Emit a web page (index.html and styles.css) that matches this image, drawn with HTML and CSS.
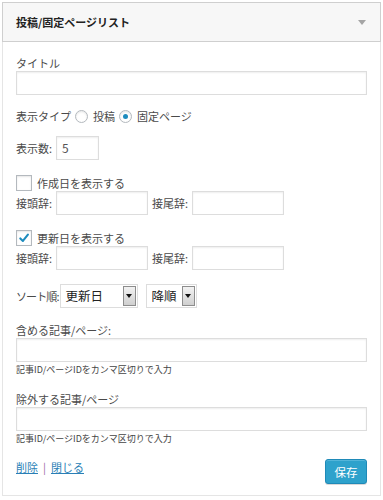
FILE: index.html
```html
<!DOCTYPE html>
<html lang="ja">
<head>
<meta charset="utf-8">
<title>投稿/固定ページリスト</title>
<link rel="stylesheet" href="styles.css">
</head>
<body>
<div class="widget">
  <div class="widget-top">
    <h3 class="widget-title">投稿/固定ページリスト</h3>
    <span class="toggle-arrow"></span>
  </div>
  <div class="widget-inside">
    <div class="block-label">タイトル</div>
    <div class="text-input wide"></div>

    <div class="row type-row">
      <span>表示タイプ</span>
      <span class="radio"></span>
      <span class="radio-label">投稿</span>
      <span class="radio checked"></span>
      <span class="radio-label">固定ページ</span>
    </div>

    <div class="row count-row">
      <span class="lbl-count">表示数:</span>
      <div class="text-input count">5</div>
    </div>

    <div class="row check-row">
      <span class="checkbox"></span>
      <span class="check-label">作成日を表示する</span>
    </div>
    <div class="row affix-row">
      <span class="lbl-affix">接頭辞:</span>
      <div class="text-input affix"></div>
      <span class="lbl-affix second">接尾辞:</span>
      <div class="text-input affix"></div>
    </div>

    <div class="row check-row">
      <span class="checkbox checked">
        <svg viewBox="0 0 16 16" width="16" height="16"><path d="M4.3 8.4 L6.9 10.9 L11.9 4.6" fill="none" stroke="#1e8cbe" stroke-width="2.1" stroke-linecap="round" stroke-linejoin="round"/></svg>
      </span>
      <span class="check-label">更新日を表示する</span>
    </div>
    <div class="row affix-row">
      <span class="lbl-affix">接頭辞:</span>
      <div class="text-input affix"></div>
      <span class="lbl-affix second">接尾辞:</span>
      <div class="text-input affix"></div>
    </div>

    <div class="row sort-row">
      <span class="lbl-sort">ソート順:</span>
      <div class="select sel-field"><span class="sel-text">更新日</span><span class="sel-btn"></span></div>
      <div class="select sel-order"><span class="sel-text">降順</span><span class="sel-btn"></span></div>
    </div>

    <div class="block-label gap">含める記事/ページ:</div>
    <div class="text-input wide"></div>
    <div class="help">記事ID/ページIDをカンマ区切りで入力</div>

    <div class="block-label gap">除外する記事/ページ</div>
    <div class="text-input wide"></div>
    <div class="help">記事ID/ページIDをカンマ区切りで入力</div>

    <div class="footer">
      <div class="links"><a href="#" class="link">削除</a><span class="sep">|</span><a href="#" class="link">閉じる</a></div>
      <button class="save">保存</button>
    </div>
  </div>
</div>
</body>
</html>
```
FILE: styles.css
```css
* { box-sizing: border-box; }
body {
  margin: 0;
  background: #ffffff;
  font-family: "Noto Sans CJK JP", "Noto Sans", sans-serif;
  font-size: 11px;
  color: #4a4a4a;
}
.widget {
  margin: 2px 0 0 2px;
  width: 379px;
}
.widget-top {
  height: 40px;
  border: 1px solid #cfcfcf;
  background: #f7f7f7;
  display: flex;
  align-items: center;
  justify-content: space-between;
  padding: 0 14px 0 13px;
}
.widget-title {
  margin: 0;
  font-size: 11px;
  font-weight: bold;
  color: #222222;
  line-height: 16px;
}
.toggle-arrow {
  width: 0;
  height: 0;
  border-left: 4px solid transparent;
  border-right: 4px solid transparent;
  border-top: 5px solid #a5a5a5;
  margin-top: 1px;
}
.widget-inside {
  border: 1px solid #e5e5e5;
  border-top: none;
  padding: 13px 13px 11px 13px;
}
.block-label {
  height: 16px;
  line-height: 16px;
  white-space: nowrap;
}
.block-label.gap { margin-top: 14px; }
.text-input {
  height: 24px;
  border: 1px solid #dddddd;
  background: #ffffff;
  box-shadow: inset 0 1px 2px rgba(0,0,0,0.07);
  color: #333333;
  flex-shrink: 0;
}
.text-input.wide { width: 100%; }
.row {
  display: flex;
  align-items: center;
  white-space: nowrap;
}
.row > span { flex-shrink: 0; }
.type-row { margin-top: 11px; height: 20px; }
.radio {
  width: 13px;
  height: 13px;
  border: 1px solid #b4b9be;
  border-radius: 50%;
  background: #ffffff;
  box-shadow: inset 0 1px 2px rgba(0,0,0,0.1);
  margin-left: 4px;
  display: flex;
  align-items: center;
  justify-content: center;
}
.radio.checked::after {
  content: "";
  width: 5px;
  height: 5px;
  border-radius: 50%;
  background: #1e8cbe;
}
.radio-label { margin-left: 5px; }
.count-row { margin-top: 10px; height: 24px; }
.lbl-count { width: 40px; }
.text-input.count {
  width: 43px;
  font-size: 12px;
  line-height: 22px;
  padding-left: 5px;
  color: #555555;
}
.check-row { margin-top: 15px; height: 16px; }
.check-row + .affix-row { margin-top: 0; }
.checkbox {
  width: 16px;
  height: 16px;
  border: 1px solid #b4b9be;
  background: #ffffff;
  box-shadow: inset 0 1px 2px rgba(0,0,0,0.1);
  position: relative;
}
.checkbox svg { position: absolute; left: -1px; top: -1px; }
.check-label { margin-left: 5px; }
.affix-row { height: 24px; }
.lbl-affix { width: 40px; }
.lbl-affix.second { margin-left: 4px; }
.text-input.affix { width: 92px; }
.sort-row { margin-top: 14px; height: 24px; }
.lbl-sort { letter-spacing: -0.9px; margin-right: 1px; }
.select {
  height: 24px;
  border: 1px solid #dddddd;
  background: #ffffff;
  display: flex;
  align-items: center;
  justify-content: space-between;
  padding: 0 1px 0 5px;
  flex-shrink: 0;
}
.sel-field { width: 78px; }
.sel-order { width: 51px; margin-left: 8px; }
.sel-text {
  font-size: 12.5px;
  color: #222222;
  line-height: 20px;
}
.sel-btn {
  width: 13px;
  height: 20px;
  border: 1px solid #8d8d8d;
  background: linear-gradient(#f2f2f2, #cfcfcf);
  display: flex;
  align-items: center;
  justify-content: center;
}
.sel-btn::after {
  content: "";
  width: 0;
  height: 0;
  border-left: 3.5px solid transparent;
  border-right: 3.5px solid transparent;
  border-top: 4px solid #111111;
}
.help {
  margin-top: 1px;
  height: 14px;
  line-height: 14px;
  font-size: 9px;
  color: #444444;
  white-space: nowrap;
}
.footer {
  margin-top: 13px;
  display: flex;
  justify-content: space-between;
  align-items: flex-start;
}
.links {
  height: 16px;
  line-height: 16px;
}
.link {
  color: #2a7fb6;
  text-decoration: underline;
}
.sep {
  color: #9a6a9e;
  margin: 0 5px;
}
.save {
  width: 42px;
  height: 25px;
  border: 1px solid #1f8ab8;
  border-radius: 3px;
  background: #2ea2cc;
  color: #ffffff;
  font-family: "Noto Sans CJK JP", "Noto Sans", sans-serif;
  font-size: 11.5px;
  padding: 0;
  box-shadow: inset 0 1px 0 rgba(120,200,230,0.5), 0 1px 0 rgba(0,0,0,0.15);
}
```
